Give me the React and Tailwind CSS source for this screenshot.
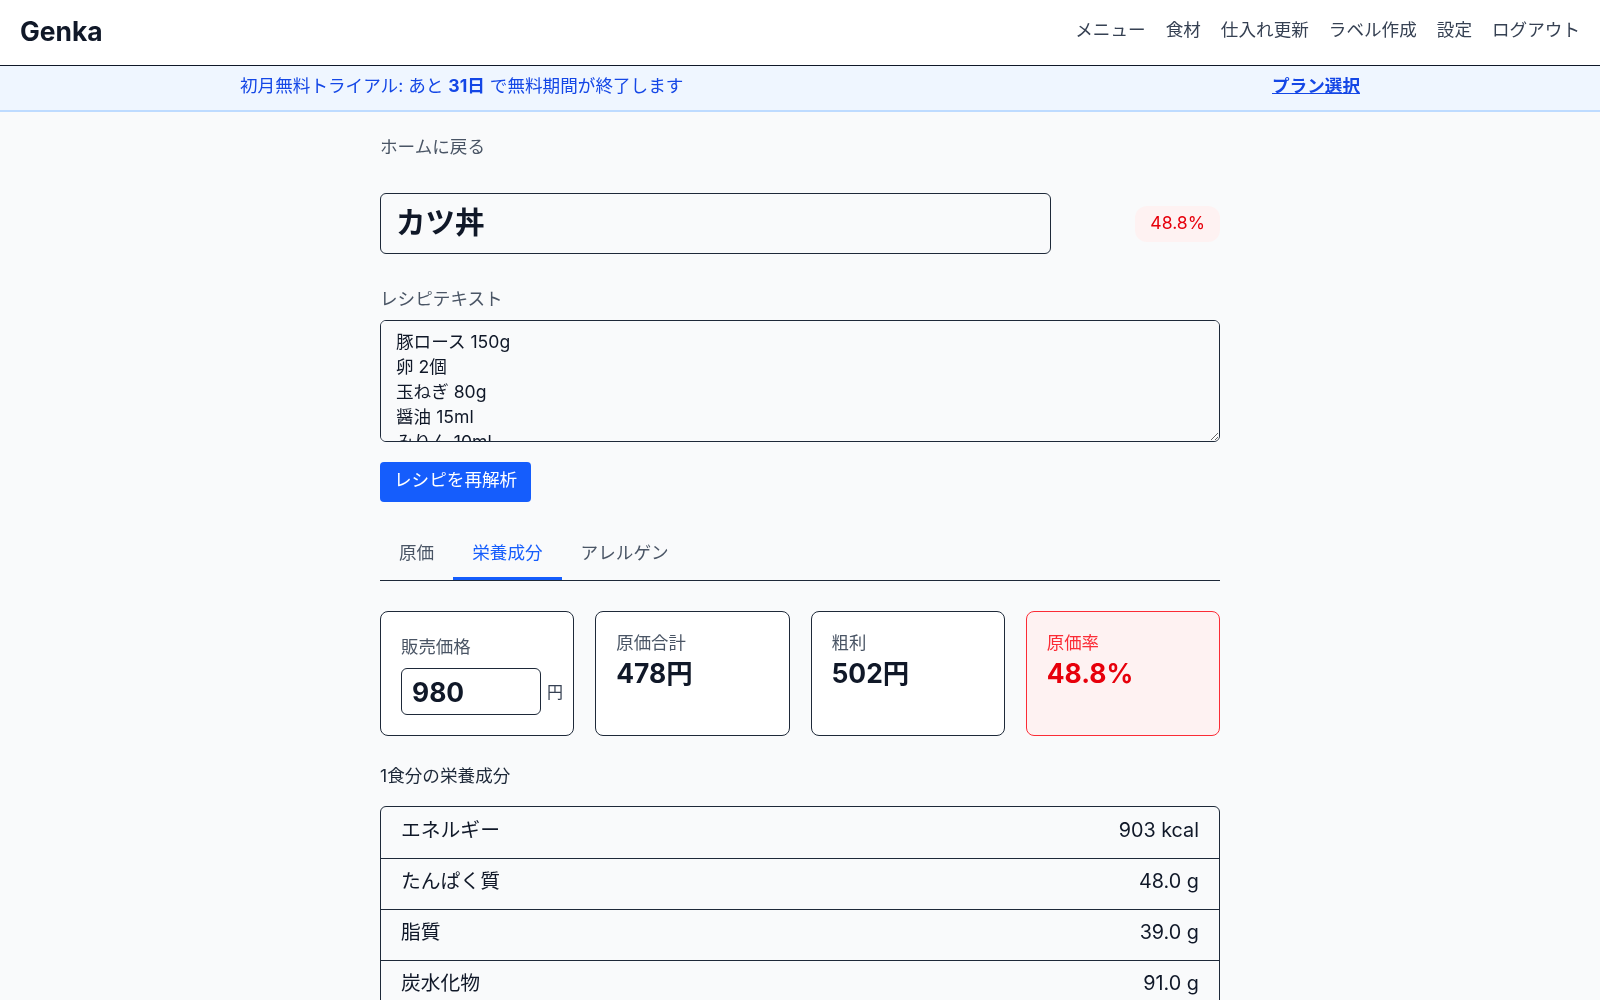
import React, { useState } from "react";

const navItems = ["メニュー", "食材", "仕入れ更新", "ラベル作成", "設定", "ログアウト"];
const tabs = ["原価", "栄養成分", "アレルゲン"];

const nutrition = [
  { label: "エネルギー", value: "903 kcal" },
  { label: "たんぱく質", value: "48.0 g" },
  { label: "脂質", value: "39.0 g" },
  { label: "炭水化物", value: "91.0 g" },
  { label: "食塩相当量", value: "4.2 g" },
];

const recipe = `豚ロース 150g
卵 2個
玉ねぎ 80g
醤油 15ml
みりん 10ml
砂糖 5g
パン粉 20g
ご飯 250g`;

function StatCard({ label, value, danger }) {
  return (
    <div
      className={
        danger
          ? "rounded-lg border border-red-500 bg-red-50 px-5 pt-[18px]"
          : "rounded-lg border border-gray-800 bg-white px-5 pt-[18px]"
      }
    >
      <div className={danger ? "text-[17.4px] leading-[26px] text-red-500" : "text-[17.4px] leading-[26px] text-gray-600"}>
        {label}
      </div>
      <div className={danger ? "text-[26.4px] font-bold leading-[34px] text-red-600" : "text-[26.4px] font-bold leading-[34px] text-gray-900"}>
        {value}
      </div>
    </div>
  );
}

export default function App() {
  const [active, setActive] = useState(1);
  const [price, setPrice] = useState("980");

  return (
    <div className="min-h-screen bg-gray-50 font-['Inter','Noto_Sans_CJK_JP',sans-serif] text-gray-900">
      <header className="flex h-[66px] items-center justify-between border-b border-gray-900 bg-white px-5 pb-1">
        <div className="pt-0.5 text-[26.4px] font-bold text-gray-900">Genka</div>
        <nav className="flex gap-5 text-[17.6px] text-gray-700">
          {navItems.map((item) => (
            <a key={item} href="#" className="hover:text-gray-900">
              {item}
            </a>
          ))}
        </nav>
      </header>

      <div className="border-b-2 border-blue-200 bg-blue-50">
        <div className="mx-auto flex h-[44px] max-w-[1120px] items-center justify-between pb-1 text-[17.6px] text-blue-700">
          <p>
            初月無料トライアル: あと <span className="font-bold">31日</span> で無料期間が終了します
          </p>
          <a href="#" className="font-bold underline">
            プラン選択
          </a>
        </div>
      </div>

      <main className="mx-auto max-w-[840px] pt-[22px]">
        <a href="#" className="block text-[17.6px] leading-[26px] text-gray-600">
          ホームに戻る
        </a>

        <div className="mt-[33px] flex items-center justify-between">
          <input
            defaultValue="カツ丼"
            className="h-[61px] w-[671px] rounded-md border border-gray-800 bg-gray-50 px-[15px] pb-2 text-[29.5px] font-bold text-gray-900 outline-none"
          />
          <span className="rounded-xl bg-red-50 px-[15px] pt-[3px] pb-[5px] text-[17.6px] leading-[28px] text-red-600">48.8%</span>
        </div>

        <label className="mt-[32px] block text-[17.6px] leading-[26px] text-gray-600">レシピテキスト</label>
        <textarea
          defaultValue={recipe}
          className="mt-[8px] block h-[122px] w-full rounded-md border border-gray-800 bg-gray-50 px-[15px] pt-[8px] text-[17.6px] leading-[25px] text-gray-900 outline-none"
        />

        <button className="mt-5 h-10 rounded bg-blue-600 px-[14px] pb-1 text-[17.6px] text-white">レシピを再解析</button>

        <div className="mt-[25px] flex border-b border-gray-800">
          {tabs.map((t, i) => (
            <button
              key={t}
              onClick={() => setActive(i)}
              className={
                i === active
                  ? "border-b-[3px] border-blue-600 px-[19px] pt-[13px] pb-[11px] text-[17.6px] leading-[26px] text-blue-600"
                  : "border-b-[3px] border-transparent px-[19px] pt-[13px] pb-[11px] text-[17.6px] leading-[26px] text-gray-600"
              }
            >
              {t}
            </button>
          ))}
        </div>

        <div className="mt-[30px] grid grid-cols-4 gap-[21px]">
          <div className="rounded-lg border border-gray-800 bg-white px-5 pt-[22px] pb-5">
            <div className="text-[17.4px] leading-[26px] text-gray-600">販売価格</div>
            <div className="mt-2 flex items-center gap-[6px]">
              <input
                value={price}
                onChange={(e) => setPrice(e.target.value)}
                className="h-[47px] w-[140px] shrink-0 rounded-md border border-gray-800 bg-white px-[10px] text-[26.4px] font-bold text-gray-900 outline-none"
              />
              <span className="text-[16px] text-gray-700">円</span>
            </div>
          </div>
          <StatCard label="原価合計" value="478円" />
          <StatCard label="粗利" value="502円" />
          <StatCard label="原価率" value="48.8%" danger />
        </div>

        <h3 className="mt-[27px] text-[17.6px] leading-[26px] text-gray-800">1食分の栄養成分</h3>

        <div className="mt-[17px] rounded-t-md border border-gray-800 pt-px">
          {nutrition.map((row) => (
            <div
              key={row.label}
              className="flex h-[51px] items-center justify-between border-b border-gray-800 px-5 pb-1 text-[19.8px] text-gray-900 last:border-b-0"
            >
              <span>{row.label}</span>
              <span>{row.value}</span>
            </div>
          ))}
        </div>
      </main>
    </div>
  );
}
